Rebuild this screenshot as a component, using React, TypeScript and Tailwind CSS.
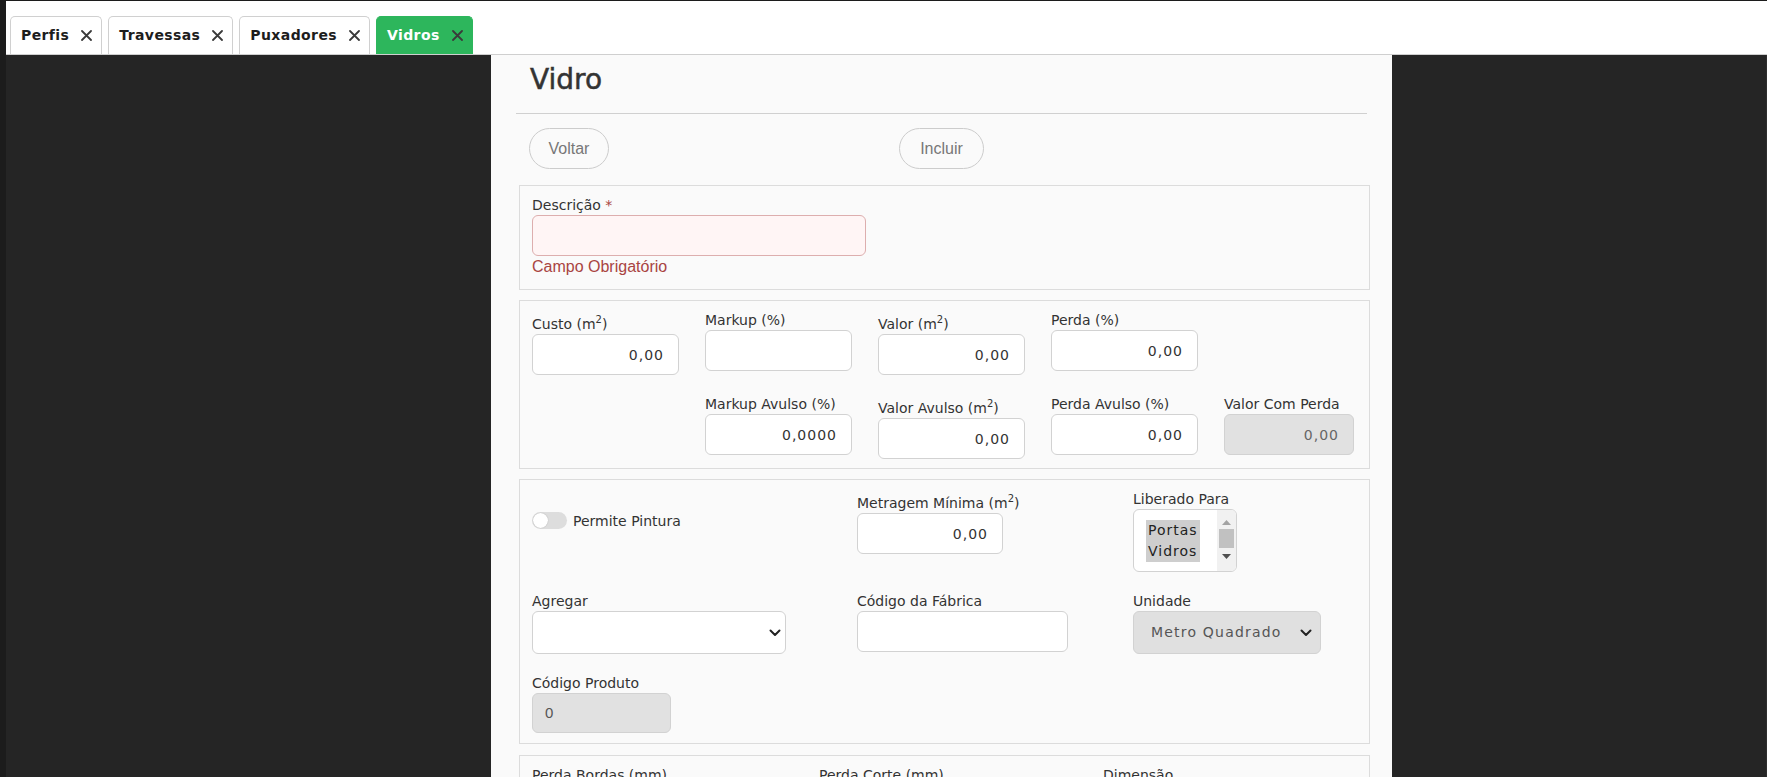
import React from 'react';

const font = { fontFamily: '"DejaVu Sans", Verdana, sans-serif' };

const XIcon = () => (
  <svg width="11" height="11" viewBox="0 0 11 11" className="shrink-0">
    <path d="M1 1 L10 10 M10 1 L1 10" stroke="#3a3a3a" strokeWidth="1.8" strokeLinecap="round" />
  </svg>
);

const Tab = ({ label, active }: { label: string; active?: boolean }) => (
  <div
    className={`h-[38px] flex items-center pl-[10px] pr-[9px] gap-[12px] rounded-t-[5px] border border-b-0 ${
      active ? 'bg-[#2db65c] border-[#2db65c] text-white' : 'bg-white border-[#d0d0d0] text-[#1d1d1d]'
    }`}
  >
    <span className="text-[14px] font-bold tracking-[0.4px]">{label}</span>
    <XIcon />
  </div>
);

const Label = ({ children }: { children: React.ReactNode }) => (
  <label className="block text-[14px] leading-[19px] text-[#333] whitespace-nowrap">{children}</label>
);

const Sup = () => <sup className="text-[10px] top-[-6px]">2</sup>;

const NumInput = ({
  value,
  width = 'w-[147px]',
  disabled,
}: {
  value: string;
  width?: string;
  disabled?: boolean;
}) => (
  <input
    readOnly
    value={value}
    className={`block h-[41px] ${width} rounded-[6px] border border-[#d2d2d2] pr-[14px] text-right text-[14px] tracking-[1px] outline-none ${
      disabled ? 'bg-[#e1e1e1] text-[#666]' : 'bg-white text-[#333]'
    }`}
    style={font}
  />
);

const Field = ({
  label,
  sup,
  children,
}: {
  label: string;
  sup?: boolean;
  children: React.ReactNode;
}) => (
  <div className={sup ? 'pt-[4px]' : ''}>
    <Label>
      {label}
      {sup && (
        <>
          {' '}(m<Sup />)
        </>
      )}
    </Label>
    {children}
  </div>
);

const Chevron = () => (
  <svg width="12" height="8" viewBox="0 0 12 8">
    <path d="M1.5 1.5 L6 6 L10.5 1.5" stroke="#222" strokeWidth="2" fill="none" strokeLinecap="round" strokeLinejoin="round" />
  </svg>
);

const Card = ({ children, className = '' }: { children: React.ReactNode; className?: string }) => (
  <div className={`ml-[28px] w-[851px] border border-[#dcdcdc] px-[12px] ${className}`}>{children}</div>
);

export default function App() {
  return (
    <div className="h-[777px] overflow-hidden bg-[#1c1c1c] pt-[1px] pl-[6px]" style={font}>
      <div className="h-[54px] bg-white border-b border-[#cfcfcf] flex items-end gap-[6px] pl-[4px]">
        <Tab label="Perfis" />
        <Tab label="Travessas" />
        <Tab label="Puxadores" />
        <Tab label="Vidros" active />
      </div>

      <div className="h-full bg-[#252525] border-r border-[#2e2e2e]">
        <div className="ml-[485px] w-[901px] h-full bg-[#fafafa]">
          <h1 className="pl-[39px] pt-[8px] text-[28px] leading-[34px] text-[#333] [-webkit-text-stroke:0.5px_#333]">
            Vidro
          </h1>
          <div className="mx-[25px] mt-[16px] h-px bg-[#d0d0d0]" />

          <div className="flex items-center mt-[14px] ml-[38px]" style={{ fontFamily: '"Liberation Sans", Arial, sans-serif' }}>
            <button className="h-[41px] w-[80px] rounded-full border border-[#cccccc] text-[16px] text-[#777]">
              Voltar
            </button>
            <button className="ml-[290px] h-[41px] w-[85px] rounded-full border border-[#cccccc] text-[16px] text-[#777]">
              Incluir
            </button>
          </div>

          <Card className="mt-[16px] pt-[10px] pb-[12px]">
            <Label>
              Descrição <span className="text-[#a94442]">*</span>
            </Label>
            <div className="h-[41px] w-[334px] rounded-[6px] border border-[#ddaeae] bg-[#fff5f5]" />
            <div
              className="text-[16px] leading-[20px] text-[#a94442] pt-[1px]"
              style={{ fontFamily: '"Liberation Sans", Arial, sans-serif' }}
            >
              Campo Obrigatório
            </div>
          </Card>

          <Card className="mt-[10px] pt-[10px] pb-[9px]">
            <div className="grid grid-cols-[173px_173px_173px_173px_130px] gap-y-[20px]">
              <Field label="Custo" sup>
                <NumInput value="0,00" />
              </Field>
              <Field label="Markup (%)">
                <NumInput value="" />
              </Field>
              <Field label="Valor" sup>
                <NumInput value="0,00" />
              </Field>
              <Field label="Perda (%)">
                <NumInput value="0,00" />
              </Field>
              <div />
              <div />
              <Field label="Markup Avulso (%)">
                <NumInput value="0,0000" />
              </Field>
              <Field label="Valor Avulso" sup>
                <NumInput value="0,00" />
              </Field>
              <Field label="Perda Avulso (%)">
                <NumInput value="0,00" />
              </Field>
              <Field label="Valor Com Perda">
                <NumInput value="0,00" width="w-[130px]" disabled />
              </Field>
            </div>
          </Card>

          <Card className="mt-[10px] pt-[10px] pb-[10px]">
            <div className="grid grid-cols-[325px_276px_200px] gap-y-[20px]">
              <div className="pt-[22px] flex items-start gap-[6px]">
                <div className="relative h-[17px] w-[35px] rounded-full bg-[#dddddd]">
                  <div className="absolute left-[1px] top-[1px] h-[15px] w-[15px] rounded-full bg-white shadow-[0_0_1px_rgba(0,0,0,0.3)]" />
                </div>
                <span className="text-[14px] leading-[17px] text-[#333] pt-[1px]">Permite Pintura</span>
              </div>
              <Field label="Metragem Mínima" sup>
                <NumInput value="0,00" width="w-[146px]" />
              </Field>
              <Field label="Liberado Para">
                <div className="flex h-[63px] w-[104px] rounded-[6px] border border-[#d2d2d2] bg-white overflow-hidden">
                  <div className="flex-1 pl-[12px] pt-[10px]">
                    <div className="inline-block bg-[#cecece] px-[2px] text-[14px] leading-[21px] tracking-[1px] text-[#222]">
                      Portas
                      <br />
                      Vidros
                    </div>
                  </div>
                  <div className="w-[19px] bg-[#f1f1f1] flex flex-col items-center pt-[10px]">
                    <svg width="9" height="5" viewBox="0 0 9 5">
                      <path d="M4.5 0 L9 5 L0 5 Z" fill="#a3a3a3" />
                    </svg>
                    <div className="mt-[4px] h-[19px] w-[15px] bg-[#c1c1c1]" />
                    <svg width="9" height="5" viewBox="0 0 9 5" className="mt-[6px]">
                      <path d="M0 0 L9 0 L4.5 5 Z" fill="#505050" />
                    </svg>
                  </div>
                </div>
              </Field>

              <Field label="Agregar">
                <div className="flex h-[43px] w-[254px] items-center justify-end rounded-[6px] border border-[#d2d2d2] bg-white pr-[4px]">
                  <Chevron />
                </div>
              </Field>
              <Field label="Código da Fábrica">
                <div className="h-[41px] w-[211px] rounded-[6px] border border-[#d2d2d2] bg-white" />
              </Field>
              <Field label="Unidade">
                <div className="flex h-[43px] w-[188px] items-center rounded-[6px] border border-[#d2d2d2] bg-[#e0e0e0] pl-[17px] pr-[8px]">
                  <span className="flex-1 text-[14px] tracking-[1.2px] text-[#555]">Metro Quadrado</span>
                  <Chevron />
                </div>
              </Field>

              <Field label="Código Produto">
                <div
                  className="flex h-[40px] w-[139px] items-center rounded-[6px] border border-[#d2d2d2] bg-[#e1e1e1] pl-[12px] text-[15px] text-[#555]"
                  style={{ fontFamily: '"Liberation Sans", Arial, sans-serif' }}
                >
                  0
                </div>
              </Field>
            </div>
          </Card>

          <Card className="mt-[11px] pt-[10px] pb-[10px]">
            <div className="grid grid-cols-[287px_284px_200px]">
              <Label>Perda Bordas (mm)</Label>
              <Label>Perda Corte (mm)</Label>
              <Label>Dimensão</Label>
            </div>
            <div className="h-[41px]" />
          </Card>
        </div>
      </div>
    </div>
  );
}
